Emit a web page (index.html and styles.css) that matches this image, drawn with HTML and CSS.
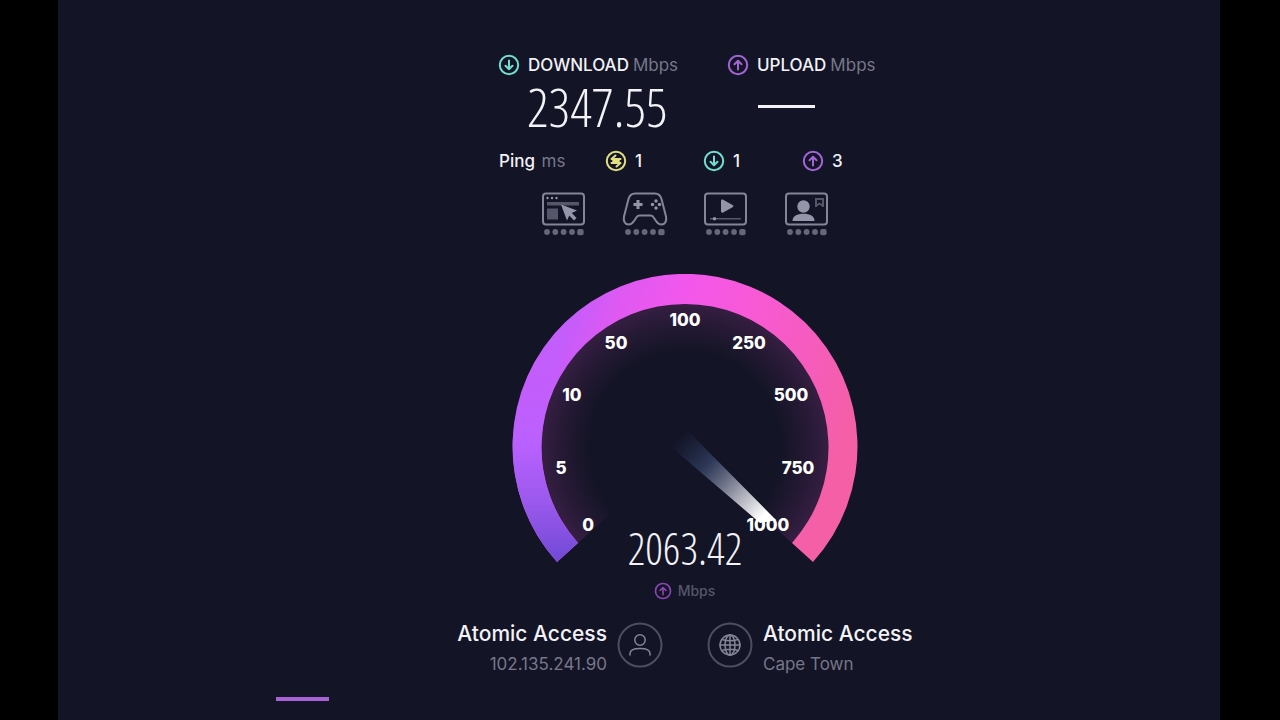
FILE: index.html
```html
<!DOCTYPE html>
<html lang="en">
<head>
<meta charset="utf-8">
<title>Speed test</title>
<link rel="stylesheet" href="styles.css">
</head>
<body>
<svg class="defs" aria-hidden="true">
  <symbol id="down" viewBox="0 0 22 22"><circle cx="11" cy="11" r="9.2"/><path d="M11 6.500v8.500M7.500 11.700 11 15.200l3.500-3.500"/></symbol>
  <symbol id="up" viewBox="0 0 22 22"><circle cx="11" cy="11" r="9.2"/><path d="M11 15.500V7M7.500 10.300 11 6.800l3.500 3.500"/></symbol>
  <symbol id="idle" viewBox="0 0 22 22"><circle cx="11" cy="11" r="9.2"/><path d="M15.500 9H6.500L10.500 5.500M6.500 13h9l-4 3.500M8 11h6"/></symbol>
  <symbol id="dots" viewBox="0 0 44 8"><circle cx="5" cy="4" r="2.900"/><circle cx="13.300" cy="4" r="2.900"/><circle cx="21.600" cy="4" r="2.900"/><circle cx="30" cy="4" r="2.900"/><rect x="35.200" y="1" width="6.400" height="6.200" rx="2"/></symbol>
</svg>
<main class="panel">
  <div class="stage">
    <section class="results">
      <div class="speeds">
        <div class="speed">
          <h2 class="label"><svg class="ring teal"><use href="#down"/></svg>DOWNLOAD <span class="unit">Mbps</span></h2>
          <p class="figure">2347.55</p>
        </div>
        <div class="speed">
          <h2 class="label"><svg class="ring violet"><use href="#up"/></svg>UPLOAD <span class="unit">Mbps</span></h2>
          <p class="pending"></p>
        </div>
      </div>
      <div class="pings">
        <span>Ping <span class="unit">ms</span></span>
        <span class="ping"><svg class="ring yellow"><use href="#idle"/></svg>1</span>
        <span class="ping"><svg class="ring teal"><use href="#down"/></svg>1</span>
        <span class="ping"><svg class="ring violet"><use href="#up"/></svg>3</span>
      </div>
    </section>

    <section class="uses">
      <div class="use">
        <svg class="pic" viewBox="0 0 46 36"><rect class="frame" x="2" y="2" width="41" height="31" rx="3"/><circle cx="6.500" cy="6.500" r="1.200"/><circle cx="11" cy="6.500" r="1.200"/><circle cx="15.500" cy="6.500" r="1.200"/><path class="dim" d="M6 10.500h32v3.500H6zM6 17h11v11H6z"/><path d="M20 13 36 19 30.800 21.500 35.500 26.500 33 29 28.300 24 26 29z"/></svg>
        <svg class="dots"><use href="#dots"/></svg>
      </div>
      <div class="use">
        <svg class="pic" viewBox="0 0 46 36"><path class="frame" d="M13 2h20c4 0 5.500 2 6.500 5.500L44 25c1 4.500-1 8-4.500 8-2.500 0-4-1.200-5.500-3.500l-2.500-3.700c-.8-1.200-1.500-1.800-3-1.800h-11c-1.500 0-2.200.6-3 1.800L12 29.500C10.500 31.800 9 33 6.500 33 3 33 1 29.500 2 25L6.500 7.500C7.500 4 9 2 13 2z"/><path d="M14.500 8.500h3v3h3v3h-3v3h-3v-3h-3v-3h3z"/><circle cx="34" cy="9.500" r="1.700"/><circle cx="34" cy="16.500" r="1.700"/><circle cx="30.500" cy="13" r="1.700"/><circle cx="37.500" cy="13" r="1.700"/></svg>
        <svg class="dots"><use href="#dots"/></svg>
      </div>
      <div class="use">
        <svg class="pic" viewBox="0 0 46 36"><rect class="frame" x="2" y="2" width="41" height="31" rx="3"/><path d="M18 9.500c0-1.500 1-2 2.200-1.300l9.300 5.300c1.200.7 1.200 1.500 0 2.200l-9.300 5.200c-1.200.7-2.200.2-2.200-1.300z"/><path class="dim" d="M7 26.500h31V28H7z"/><circle cx="11.500" cy="27.200" r="1.800"/></svg>
        <svg class="dots"><use href="#dots"/></svg>
      </div>
      <div class="use">
        <svg class="pic" viewBox="0 0 46 36"><rect class="frame" x="2" y="2" width="41" height="31" rx="3"/><circle cx="19.500" cy="15" r="6.200"/><path d="M8.500 29.500c0-5 4.500-7.200 11-7.200s11 2.200 11 7.200z"/><path class="dim" d="M31 6.500h9v9h-1.500l-3-2.500-3 2.500H31zm2 2v4l2.500-1.500 2.500 1.500v-4z" fill-rule="evenodd"/></svg>
        <svg class="dots"><use href="#dots"/></svg>
      </div>
    </section>

    <section class="gauge">
      <svg class="dial" viewBox="-173 -173 346 290" role="img" aria-label="Upload speed gauge">
        <defs>
          <linearGradient id="band" gradientUnits="userSpaceOnUse" x1="-143" y1="-45" x2="143" y2="45">
            <stop offset="0" stop-color="#c35dfb"/><stop offset=".15" stop-color="#df59f2"/><stop offset=".34" stop-color="#f257ec"/><stop offset=".55" stop-color="#f859d8"/><stop offset=".8" stop-color="#f55cbd"/><stop offset="1" stop-color="#f45fa6"/>
          </linearGradient>
          <linearGradient id="start" gradientUnits="userSpaceOnUse" x1="0" y1="-90" x2="0" y2="115">
            <stop offset="0" stop-color="#c35dfb" stop-opacity="0"/><stop offset=".42" stop-color="#b961ff"/><stop offset=".7" stop-color="#9c59ed"/><stop offset="1" stop-color="#7149d6"/>
          </linearGradient>
          <radialGradient id="glow" gradientUnits="userSpaceOnUse" cx="0" cy="0" r="144">
            <stop offset=".66" stop-color="#a03c9c" stop-opacity="0"/><stop offset=".84" stop-color="#a03c9c" stop-opacity=".12"/><stop offset="1" stop-color="#a03c9c" stop-opacity=".25"/>
          </radialGradient>
          <linearGradient id="beam" gradientUnits="userSpaceOnUse" x1="-8" y1="-10" x2="84" y2="76">
            <stop offset="0" stop-color="#27375f" stop-opacity="0"/><stop offset=".32" stop-color="#354266" stop-opacity=".75"/><stop offset=".65" stop-color="#9c9eac"/><stop offset=".93" stop-color="#fff"/>
          </linearGradient>
        </defs>
        <path fill="url(#glow)" d="M-107 96A144 144 0 1 1 107 96L0 0z"/>
        <path fill="url(#band)" d="M-128 115A172.500 172.500 0 1 1 128 115L107 96A143.500 143.500 0 1 0-107 96z"/>
        <path fill="url(#start)" d="M-128 115A172.500 172.500 0 0 1-147-90L-112-90A143.500 143.500 0 0 0-107 96z"/>
        <path fill="url(#beam)" d="M-15-1 3-16 91 73 75 76z"/>
        <g class="ticks">
          <text x="-97" y="84">0</text><text x="-124" y="27">5</text><text x="-113" y="-46">10</text><text x="-69" y="-98">50</text><text x="0" y="-121">100</text><text x="64" y="-98">250</text><text x="106" y="-46">500</text><text x="113" y="27">750</text><text x="83" y="84">1000</text>
        </g>
      </svg>
      <div class="readout">
        <span class="live">2063.42</span>
        <span class="live-unit"><svg class="ring violet"><use href="#up"/></svg>Mbps</span>
      </div>
    </section>

    <section class="hosts">
      <div class="host client">
        <div><h3>Atomic Access</h3><p>102.135.241.90</p></div>
        <svg class="badge" viewBox="0 0 46 46"><circle class="rim" cx="23" cy="23" r="21.500"/><circle cx="23" cy="18" r="5.200"/><path d="M13 33v-1.500c0-3.500 3.500-5 10-5s10 1.500 10 5V33"/></svg>
      </div>
      <div class="host">
        <svg class="badge" viewBox="0 0 46 46"><circle class="rim" cx="23" cy="23" r="21.500"/><circle cx="23" cy="23" r="10"/><ellipse cx="23" cy="23" rx="5" ry="10"/><path d="M23 13v20M13 23h20M15 17.500c5 1.500 11 1.500 16 0M15 28.500c5-1.500 11-1.500 16 0"/></svg>
        <div><h3>Atomic Access</h3><p>Cape Town</p></div>
      </div>
    </section>
  </div>
  <div class="progress"></div>
</main>
</body>
</html>
```
FILE: styles.css
```css
* { box-sizing: border-box; }
body {
  margin: 0;
  padding: 0 60px 0 58px;
  background: #000;
  color: #f2f2f7;
  font: 500 17px/20px Inter, "Open Sans", sans-serif;
}
h2, h3, p { margin: 0; font-weight: 500; }
svg { display: block; flex: none; }
.defs { position: absolute; width: 0; height: 0; }
.panel { min-height: 100vh; padding-top: 54px; background: #131425; }
.stage {
  display: flex;
  flex-direction: column;
  align-items: center;
  padding-left: 92px;
}
.results { width: 372px; white-space: nowrap; }
.speeds { display: grid; grid-template-columns: 229px 1fr; }
.label { display: flex; align-items: center; height: 22px; gap: 4px; font-size: 17px; }
.label .ring { margin-right: 4px; }
.unit { color: #77778a; font-weight: 400; }
.pings .unit { margin-left: 2px; }
.ring { width: 22px; height: 22px; margin-left: -1px; fill: none; stroke: currentColor; stroke-width: 2; stroke-linecap: round; stroke-linejoin: round; }
.teal { color: #6fe0d0; }
.violet { color: #a365d6; }
.yellow { color: #e2df80; }
.figure {
  height: 60px;
  padding-left: 28px;
  font: 300 54px/60px "Open Sans Condensed Light", "Roboto Condensed Light", "Liberation Sans Narrow", sans-serif;
}
.pending { width: 57px; height: 3px; margin: 29px 0 0 30px; background: #f2f2f7; }
.pings { display: grid; grid-template-columns: 107px 98px 99px 1fr; align-items: center; height: 22px; margin-top: 14px; }
.ping { display: flex; align-items: center; gap: 8px; }
.uses { display: flex; gap: 35px; margin-top: 19px; }
.use { width: 46px; }
.pic { width: 46px; height: 37px; fill: #9595a9; }
.frame { fill: none; stroke: #858598; stroke-width: 2; }
.dim { fill: #55566a; }
.dots { width: 46px; height: 8px; fill: #66677b; }
.gauge { display: grid; justify-items: center; margin-top: 38px; }
.dial, .readout { grid-area: 1 / 1; }
.dial { width: 346px; height: 290px; }
.ticks { fill: #fff; font-size: 17px; font-weight: 800; text-anchor: middle; }
.readout { display: flex; flex-direction: column; align-items: center; padding-top: 248px; }
.live { font: 300 44px/52px "Open Sans Condensed Light", "Roboto Condensed Light", "Liberation Sans Narrow", sans-serif; }
.live-unit { display: flex; align-items: center; gap: 6px; margin-top: 7px; color: #55566a; font-size: 14px; line-height: 20px; }
.live-unit .ring { width: 18px; height: 18px; color: #8b45b0; }
.hosts { display: flex; gap: 44px; margin-top: 21px; }
.host { display: flex; align-items: flex-start; gap: 10px; }
.client { text-align: right; }
.host h3 { font-size: 21px; line-height: 24px; }
.host p { color: #77778a; font-size: 17px; line-height: 24px; margin-top: 6px; font-weight: 400; }
.badge { width: 46px; height: 46px; fill: none; stroke: #858598; stroke-width: 1.5; stroke-linecap: round; }
.rim { stroke: #4d4e60; stroke-width: 2; }
.progress { width: 53px; height: 4px; margin: 21px 0 0 218px; background: #a763d5; }
```
